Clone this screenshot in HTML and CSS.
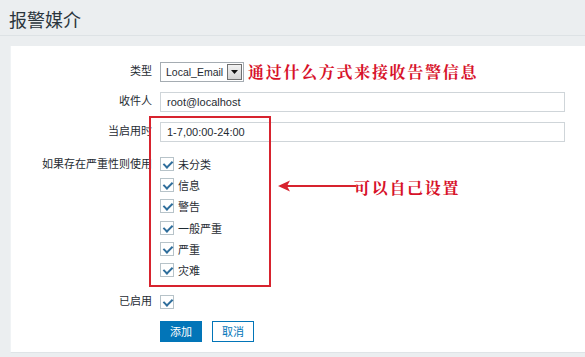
FILE: index.html
```html
<!DOCTYPE html>
<html lang="zh">
<head>
<meta charset="utf-8">
<title>报警媒介</title>
<link rel="stylesheet" href="styles.css">
</head>
<body>
<div class="header"><h1 class="title">报警媒介</h1></div>
<div class="panel">
  <div class="form">
    <div class="label row-sel">类型</div>
    <div class="ctrl row-sel">
      <div class="select"><span class="select-text">Local_Email</span><span class="select-btn"><svg width="7" height="4" viewBox="0 0 7 4"><path d="M0 0H7L3.5 4Z" fill="#111"/></svg></span></div>
      <span class="note note-type">通过什么方式来接收告警信息</span>
    </div>

    <div class="label row-in">收件人</div>
    <div class="ctrl row-in"><div class="input">root@localhost</div></div>

    <div class="label row-in">当启用时</div>
    <div class="ctrl row-in"><div class="input">1-7,00:00-24:00</div></div>

    <div class="label row-first">如果存在严重性则使用</div>
    <div class="ctrl checklist">
      <div class="check-row"><span class="cb"></span>未分类</div>
      <div class="check-row"><span class="cb"></span>信息</div>
      <div class="check-row"><span class="cb"></span>警告</div>
      <div class="check-row"><span class="cb"></span>一般严重</div>
      <div class="check-row"><span class="cb"></span>严重</div>
      <div class="check-row"><span class="cb"></span>灾难</div>
    </div>

    <div class="label row-en">已启用</div>
    <div class="ctrl row-en"><span class="cb"></span></div>

    <div class="label"></div>
    <div class="ctrl buttons">
      <span class="btn btn-primary">添加</span>
      <span class="btn btn-alt">取消</span>
    </div>
  </div>

  <div class="mark-box"></div>
  <svg class="mark-arrow" width="80" height="12" viewBox="0 0 80 12">
    <path d="M9 6H78" stroke="#d7232e" stroke-width="2.2"/>
    <path d="M0 6L12 0.5L9 6L12 11.5Z" fill="#d7232e"/>
  </svg>
  <span class="note note-set">可以自己设置</span>
</div>
</body>
</html>
```
FILE: styles.css
```css
html, body {
  margin: 0;
  padding: 0;
}
body {
  background: #ebeef0;
  font-family: "Liberation Sans", Arial, "Noto Sans CJK SC", sans-serif;
  font-size: 11px;
  color: #1f2c33;
  width: 585px;
  height: 357px;
  overflow: hidden;
}
.header {
  height: 36px;
  border-bottom: 1px solid #dde2e5;
  box-sizing: border-box;
  padding-left: 9px;
}
.title {
  margin: 0;
  font-family: "Noto Sans CJK SC", sans-serif;
  font-weight: normal;
  font-size: 18px;
  line-height: 38px;
  color: #2a353c;
}
.panel {
  position: relative;
  margin: 10px 0 0 10px;
  height: 307px;
  background: #fff;
  border-left: 1px solid #f0f3f5;
  border-bottom: 1px solid #dfe4e7;
  box-sizing: border-box;
  padding-top: 16px;
}
.form {
  display: grid;
  grid-template-columns: 141px 405px;
  column-gap: 8px;
  align-items: center;
}
.label {
  text-align: right;
  font-family: "Noto Sans CJK SC", sans-serif;
  font-size: 11px;
  white-space: nowrap;
}
.ctrl {
  display: flex;
  align-items: center;
}
.row-sel { height: 20px; margin-bottom: 10px; }
.row-in { height: 20px; margin-bottom: 10px; }
.row-first { align-self: start; height: 21px; line-height: 21px; margin-top: 1px; }
.checklist {
  flex-direction: column;
  align-items: flex-start;
  margin-top: 1px;
}
.check-row {
  height: 21.3px;
  display: flex;
  align-items: center;
  font-family: "Noto Sans CJK SC", sans-serif;
  font-size: 11px;
}
.row-en { height: 21px; margin-top: 11px; }
.buttons { margin-top: 8px; gap: 10px; }

.select {
  display: flex;
  height: 20px;
  box-sizing: border-box;
  border: 1px solid #a5acb2;
  background: #fff;
}
.select-text {
  width: 66px;
  padding-left: 5px;
  line-height: 18px;
  font-size: 10.5px;
  box-sizing: border-box;
  overflow: hidden;
  white-space: nowrap;
}
.select-btn {
  width: 15px;
  margin: 1px 1px 1px 0;
  box-sizing: border-box;
  border: 1px solid #707070;
  background: linear-gradient(#f2f2f2, #d4d4d4);
  display: flex;
  align-items: center;
  justify-content: center;
}
.input {
  width: 405px;
  height: 20px;
  box-sizing: border-box;
  border: 1px solid #cfd5d9;
  padding-left: 6px;
  line-height: 18px;
  font-size: 11px;
}
.cb {
  width: 14px;
  height: 14px;
  box-sizing: border-box;
  border: 1px solid #b7c3c9;
  background: #fff;
  margin-right: 4px;
  position: relative;
  flex: none;
}
.cb::after {
  content: "";
  position: absolute;
  left: 4px;
  top: 1px;
  width: 4px;
  height: 7px;
  border-right: 2px solid #2f6e9c;
  border-bottom: 2px solid #2f6e9c;
  transform: rotate(45deg);
  transform-origin: center;
}
.btn {
  height: 21px;
  box-sizing: border-box;
  width: 42px;
  display: flex;
  align-items: center;
  justify-content: center;
  font-family: "Noto Sans CJK SC", sans-serif;
  font-size: 11px;
}
.btn-primary {
  background: #0275b8;
  border: 1px solid #0275b8;
  color: #fff;
}
.btn-alt {
  background: #fff;
  border: 1px solid #0275b8;
  color: #0275b8;
}
.note {
  font-family: "Noto Serif CJK SC", "Noto Sans CJK SC", serif;
  font-weight: bold;
  color: #d7122a;
  font-size: 16px;
  letter-spacing: 1.7px;
  white-space: nowrap;
}
.note-type {
  margin-left: 4px;
  line-height: 20px;
}
.mark-box {
  position: absolute;
  left: 138px;
  top: 70px;
  width: 122px;
  height: 171px;
  box-sizing: border-box;
  border: 2px solid #d7232e;
}
.mark-arrow {
  position: absolute;
  left: 267px;
  top: 134px;
}
.note-set {
  position: absolute;
  left: 343px;
  top: 132px;
  line-height: 20px;
}
```
